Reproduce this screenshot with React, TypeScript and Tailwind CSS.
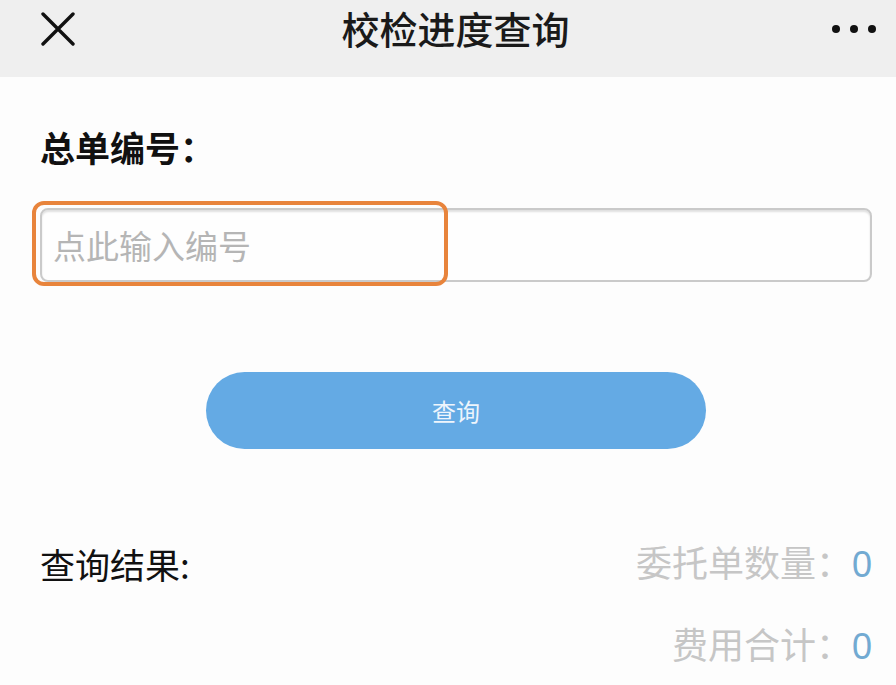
import React from "react";

const cjk = { fontFamily: '"Noto Sans CJK SC", "Noto Sans", sans-serif' };

function CloseIcon() {
  return (
    <svg width="34" height="34" viewBox="0 0 34 34" fill="none">
      <path d="M2 2 L32 32 M32 2 L2 32" stroke="#111" strokeWidth="3.4" strokeLinecap="round" />
    </svg>
  );
}

function MoreDots() {
  return (
    <div className="flex items-center gap-[10px]">
      <span className="w-[8px] h-[8px] rounded-full bg-[#111]" />
      <span className="w-[8px] h-[8px] rounded-full bg-[#111]" />
      <span className="w-[8px] h-[8px] rounded-full bg-[#111]" />
    </div>
  );
}

export default function App() {
  return (
    <div className="w-[896px] h-[685px] overflow-hidden bg-[#fdfdfd]" style={cjk}>
      <header className="h-[77px] bg-[#efefef] grid grid-cols-[1fr_auto_1fr] items-center pl-[41px] pr-[20px]">
        <div className="flex items-center pb-[19px]">
          <CloseIcon />
        </div>
        <h1 className="text-[38px] leading-none font-medium text-[#1a1a1a] pb-[22px] pr-[6px]">校检进度查询</h1>
        <div className="flex justify-end pb-[19px]">
          <MoreDots />
        </div>
      </header>

      <main className="pl-[40px] pr-[24px]">
        <p className="mt-[52px] text-[35px] leading-none font-bold text-[#111]">总单编号：</p>

        <div className="relative mt-[44px]">
          <div className="h-[74px] rounded-[8px] border-2 border-[#cacaca] bg-[#fefefe] shadow-[inset_0_2px_2px_rgba(0,0,0,0.12)] flex items-center pl-[11px]">
            <span className="text-[33px] leading-none text-[#b5b5b5]">点此输入编号</span>
          </div>
          <div className="absolute left-[-8px] top-[-7px] w-[416px] h-[85px] rounded-[12px] border-4 border-[#e8843c] pointer-events-none" />
        </div>

        <button className="mt-[90px] mx-auto flex items-center justify-center w-[500px] h-[77px] rounded-full bg-[#64aae4] text-[24px] leading-none text-[#eef5fc]">
          查询
        </button>

        <div className="mt-[94px] flex items-center justify-between">
          <span className="text-[35px] leading-none text-[#111]">查询结果:</span>
          <span className="text-[36px] leading-none text-[#c6c6c6]">
            委托单数量：<span className="text-[#72aad2]" style={{ fontFamily: '"Liberation Sans", sans-serif' }}>0</span>
          </span>
        </div>

        <div className="mt-[42px] flex justify-end">
          <span className="text-[36px] leading-none text-[#c6c6c6]">
            费用合计：<span className="text-[#72aad2]" style={{ fontFamily: '"Liberation Sans", sans-serif' }}>0</span>
          </span>
        </div>
      </main>
    </div>
  );
}
